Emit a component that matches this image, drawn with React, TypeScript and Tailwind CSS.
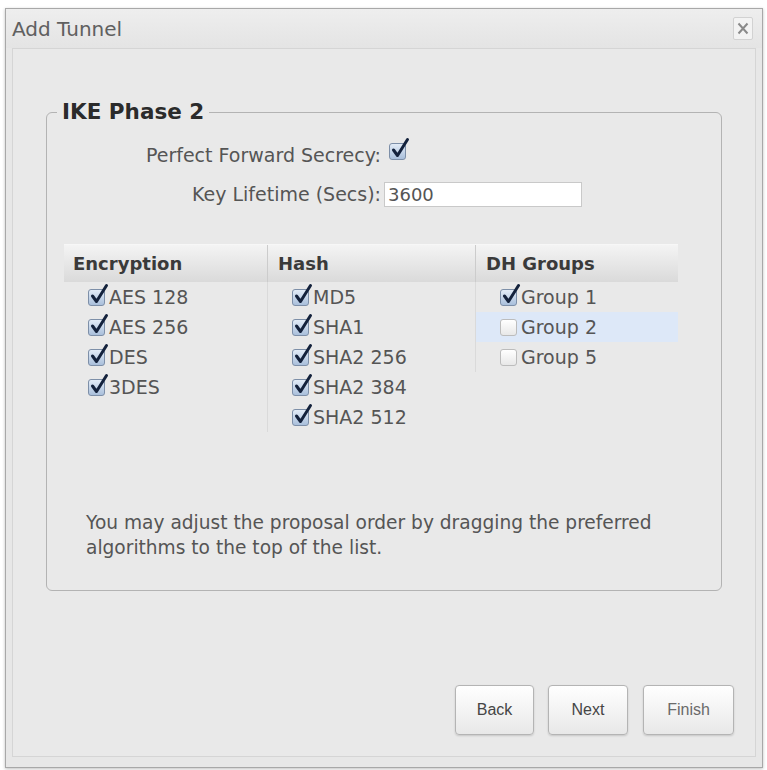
import React from "react";

const Box = ({ checked }: { checked: boolean }) => (
  <span className="relative inline-block w-[17px] h-[17px] shrink-0">
    <span
      className={
        checked
          ? "block w-full h-full rounded-[3px] border border-[#7d8fa8] bg-linear-to-b from-[#e3ecf7] to-[#a9bfdb]"
          : "block w-full h-full rounded-[3px] border border-[#bcbcbc] bg-linear-to-b from-white to-[#e8e8e8]"
      }
    />
    {checked && (
      <svg className="absolute left-[1px] -top-[6px] w-[20px] h-[22px]" viewBox="0 0 20 22">
        <path d="M3.5 13 L7.5 18.5 L17.5 2.5" fill="none" stroke="#14223c" strokeWidth="3" strokeLinecap="round" strokeLinejoin="round" />
      </svg>
    )}
  </span>
);

const columns = [
  {
    title: "Encryption",
    items: [
      { name: "AES 128", on: true },
      { name: "AES 256", on: true },
      { name: "DES", on: true },
      { name: "3DES", on: true },
    ],
  },
  {
    title: "Hash",
    items: [
      { name: "MD5", on: true },
      { name: "SHA1", on: true },
      { name: "SHA2 256", on: true },
      { name: "SHA2 384", on: true },
      { name: "SHA2 512", on: true },
    ],
  },
  {
    title: "DH Groups",
    items: [
      { name: "Group 1", on: true },
      { name: "Group 2", on: false, selected: true },
      { name: "Group 5", on: false },
    ],
  },
];

export default function App() {
  return (
    <div className="w-[767px] h-[770px] bg-white pt-[8px] pl-[5px] font-['DejaVu_Sans',sans-serif]">
      <div className="w-[758px] h-[760px] border border-[#a8a8a8] bg-[#e7e7e7] flex flex-col shadow-[0_1px_3px_rgba(0,0,0,0.25)]">
        {/* title bar */}
        <div className="h-[39px] shrink-0 flex items-center justify-between pl-[6px] pr-[9px] bg-linear-to-b from-[#eeeeee] to-[#e4e4e4]">
          <span className="text-[20px] text-[#606060]">Add Tunnel</span>
          <span className="w-[20px] h-[23px] flex items-center justify-center border border-[#d2d2d2] bg-[#f3f3f3] rounded-[2px]">
            <svg width="12" height="13" viewBox="0 0 12 13">
              <path d="M1.5 1.5 L10.5 11.5 M10.5 1.5 L1.5 11.5" stroke="#8a8a8a" strokeWidth="2" />
            </svg>
          </span>
        </div>

        {/* body */}
        <div className="flex-1 mx-[6px] mb-[10px] border border-[#d5d5d5] bg-[#e9e9e9] flex flex-col">
          <fieldset className="mt-[50px] ml-[33px] w-[676px] border border-[#b3b3b3] rounded-[6px] pb-[30px]">
            <legend className="ml-[10px] px-[5px] text-[21.5px] leading-[26px] font-bold text-[#2b2b2b]">
              IKE Phase 2
            </legend>

            <div className="mt-[16px] h-[28px] flex items-center">
              <span className="w-[334px] text-right text-[19px] text-[#555]">Perfect Forward Secrecy:</span>
              <span className="ml-[8px]">
                <Box checked />
              </span>
            </div>

            <div className="mt-[11px] h-[28px] flex items-center">
              <span className="w-[334px] text-right text-[19px] text-[#555]">Key Lifetime (Secs):</span>
              <input
                readOnly
                value="3600"
                className="ml-[3px] w-[198px] h-[25px] bg-white border border-[#c9c9c9] px-[3px] text-[18px] text-[#555] outline-none"
              />
            </div>

            {/* algorithm table */}
            <div className="mt-[36px] ml-[17px] w-[614px]">
              <div className="grid grid-cols-[203px_208px_203px] h-[38px] bg-linear-to-b from-[#f4f4f4] to-[#dadada] border-t border-[#f7f7f7]">
                {columns.map((c, i) => (
                  <div
                    key={c.title}
                    className={
                      i === 0
                        ? "flex items-center pl-[9px] text-[18px] font-bold text-[#3a3a3a]"
                        : "flex items-center pl-[10px] text-[18px] font-bold text-[#3a3a3a] border-l border-[#cccccc]"
                    }
                  >
                    {c.title}
                  </div>
                ))}
              </div>
              <div className="grid grid-cols-[203px_208px_203px] h-[228px] items-start">
                {columns.map((c, i) => (
                  <div key={c.title} className={i === 0 ? "" : "border-l border-[#dadada]"}>
                    {c.items.map((it: { name: string; on: boolean; selected?: boolean }) => (
                      <div
                        key={it.name}
                        className={
                          it.selected
                            ? "h-[30px] flex items-center gap-[4px] pl-[24px] bg-[#dde8f8]"
                            : "h-[30px] flex items-center gap-[4px] pl-[24px]"
                        }
                      >
                        <Box checked={it.on} />
                        <span className="text-[19px] text-[#555]">{it.name}</span>
                      </div>
                    ))}
                  </div>
                ))}
              </div>
            </div>

            <p className="ml-[39px] text-[18.6px] leading-[25px] text-[#555]">
              You may adjust the proposal order by dragging the preferred
              <br />
              algorithms to the top of the list.
            </p>
          </fieldset>

          <div className="mt-[94px] flex justify-end pr-[21px] font-['Liberation_Sans',sans-serif]">
            <button className="w-[79px] h-[50px] rounded-[4px] border border-[#b4b4b4] bg-linear-to-b from-white to-[#e8e8e8] shadow-[0_1px_2px_rgba(0,0,0,0.15)] text-[16px] text-[#454545]">
              Back
            </button>
            <button className="ml-[14px] w-[80px] h-[50px] rounded-[4px] border border-[#b4b4b4] bg-linear-to-b from-white to-[#e8e8e8] shadow-[0_1px_2px_rgba(0,0,0,0.15)] text-[16px] text-[#454545]">
              Next
            </button>
            <button className="ml-[15px] w-[91px] h-[50px] rounded-[4px] border border-[#b4b4b4] bg-linear-to-b from-white to-[#e8e8e8] shadow-[0_1px_2px_rgba(0,0,0,0.15)] text-[16px] text-[#6a6a6a]">
              Finish
            </button>
          </div>
        </div>
      </div>
    </div>
  );
}
